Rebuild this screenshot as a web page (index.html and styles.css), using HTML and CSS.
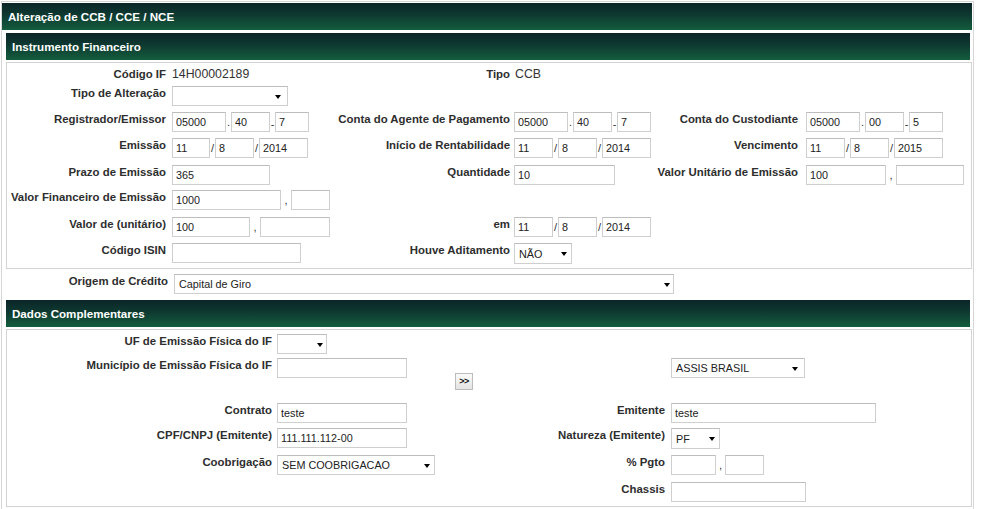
FILE: index.html
```html
<!DOCTYPE html>
<html lang="pt-BR">
<head>
    <meta charset="UTF-8">
    <title>Alteração de CCB / CCE / NCE</title>
    <link rel="stylesheet" href="styles.css">
</head>
<body>
    <div class="page">
        <div class="title-bar">Alteração de CCB / CCE / NCE</div>

        <div class="page-body">
            <div class="section-bar">Instrumento Financeiro</div>

            <!-- bloco 1: dados do instrumento -->
            <div class="box box-if">
                <div class="lbl col1">Código IF</div>
                <div class="val col2">14H00002189</div>
                <div class="lbl col3">Tipo</div>
                <div class="val col4">CCB</div>

                <div class="lbl col1">Tipo de Alteração</div>
                <div class="fld col2"><span class="sel w116 arrow-wide"><select><option></option></select></span></div>

                <div class="lbl col1">Registrador/Emissor</div>
                <div class="fld col2">
                    <input class="in w54" value="05000"><span class="sep">.</span><input class="in w39" value="40"><span class="sep dash">-</span><input class="in w34" value="7">
                </div>
                <div class="lbl col3">Conta do Agente de Pagamento</div>
                <div class="fld col4">
                    <input class="in w54" value="05000"><span class="sep">.</span><input class="in w39" value="40"><span class="sep dash">-</span><input class="in w34" value="7">
                </div>
                <div class="lbl col5">Conta do Custodiante</div>
                <div class="fld col6">
                    <input class="in w54" value="05000"><span class="sep">.</span><input class="in w39" value="00"><span class="sep dash">-</span><input class="in w34" value="5">
                </div>

                <div class="lbl col1">Emissão</div>
                <div class="fld col2">
                    <input class="in w38" value="11"><span class="sep">/</span><input class="in w39" value="8"><span class="sep">/</span><input class="in w49" value="2014">
                </div>
                <div class="lbl col3">Início de Rentabilidade</div>
                <div class="fld col4">
                    <input class="in w39" value="11"><span class="sep">/</span><input class="in w39" value="8"><span class="sep">/</span><input class="in w49" value="2014">
                </div>
                <div class="lbl col5">Vencimento</div>
                <div class="fld col6">
                    <input class="in w39" value="11"><span class="sep">/</span><input class="in w39" value="8"><span class="sep">/</span><input class="in w49" value="2015">
                </div>

                <div class="lbl col1">Prazo de Emissão</div>
                <div class="fld col2"><input class="in w98" value="365"></div>
                <div class="lbl col3">Quantidade</div>
                <div class="fld col4"><input class="in w101" value="10"></div>
                <div class="lbl col5">Valor Unitário de Emissão</div>
                <div class="fld col6">
                    <input class="in w80" value="100"><span class="sep wide">,</span><input class="in w68" value="">
                </div>

                <div class="lbl col1">Valor Financeiro de Emissão</div>
                <div class="fld col2">
                    <input class="in w109" value="1000"><span class="sep wide">,</span><input class="in w39" value="">
                </div>

                <div class="lbl col1">Valor de (unitário)</div>
                <div class="fld col2">
                    <input class="in w78" value="100"><span class="sep wide">,</span><input class="in w70" value="">
                </div>
                <div class="lbl col3">em</div>
                <div class="fld col4">
                    <input class="in w39" value="11"><span class="sep">/</span><input class="in w39" value="8"><span class="sep">/</span><input class="in w49" value="2014">
                </div>

                <div class="lbl col1">Código ISIN</div>
                <div class="fld col2"><input class="in w129" value=""></div>
                <div class="lbl col3">Houve Aditamento</div>
                <div class="fld col4"><span class="sel w58 tall"><select><option>NÃO</option></select></span></div>
            </div>

            <div class="origem">
                <div class="lbl">Origem de Crédito</div>
                <span class="sel w500 arrow-tight"><select><option>Capital de Giro</option></select></span>
            </div>

            <div class="section-bar">Dados Complementares</div>

            <!-- bloco 2: dados complementares -->
            <div class="box box-dc">
                <div class="lbl col1">UF de Emissão Física do IF</div>
                <div class="fld col2"><span class="sel w50 arrow-tight"><select><option></option></select></span></div>

                <div class="lbl col1">Município de Emissão Física do IF</div>
                <div class="fld col2"><input class="in w130" value=""></div>
                <div class="col3"><button class="btn-add" type="button">&gt;&gt;</button></div>
                <div class="fld col5"><span class="sel w134 arrow-wide"><select><option>ASSIS BRASIL</option></select></span></div>

                <div class="lbl col1">Contrato</div>
                <div class="fld col2"><input class="in w130" value="teste"></div>
                <div class="lbl col4">Emitente</div>
                <div class="fld col5"><input class="in w205" value="teste"></div>

                <div class="lbl col1">CPF/CNPJ (Emitente)</div>
                <div class="fld col2"><input class="in w130" value="111.111.112-00"></div>
                <div class="lbl col4">Natureza (Emitente)</div>
                <div class="fld col5"><span class="sel w49 tall"><select><option>PF</option></select></span></div>

                <div class="lbl col1">Coobrigação</div>
                <div class="fld col2"><span class="sel w158"><select><option>SEM COOBRIGACAO</option></select></span></div>
                <div class="lbl col4">% Pgto</div>
                <div class="fld col5">
                    <input class="in w45" value=""><span class="sep pct">,</span><input class="in w39" value="">
                </div>

                <div class="lbl col4">Chassis</div>
                <div class="fld col5"><input class="in w135" value=""></div>
            </div>
        </div>
    </div>
</body>
</html>
```

FILE: styles.css
```css
* {
    margin: 0;
    padding: 0;
    box-sizing: border-box;
}

html, body {
    overflow: hidden;
}

body {
    background: #fff;
    color: #333;
    font-family: "Liberation Sans", Arial, sans-serif;
}

.page {
    width: 973px;
    margin: 1px 0 0 1px;
    padding: 1px 0 30px;
    border: 1px solid #d6d6d6;
}

.title-bar,
.section-bar {
    height: 27px;
    padding-left: 6px;
    line-height: 27px;
    color: #fff;
    font-size: 11.6px;
    font-weight: bold;
    background: linear-gradient(to bottom, #0b2528 0%, #0e3a31 45%, #145d3d 100%);
}

.title-bar {
    margin-right: 1px;
}

.page-body {
    padding: 3px 0 0 4px;
}

.section-bar {
    margin-right: 3px;
    margin-bottom: 2px;
}

.box {
    display: grid;
    margin-right: 1px;
    border: 1px solid #d3d3d3;
}

/* grade de 3 pares label/campo */
.box-if {
    grid-template-columns: 159px 169px 175px 145px 143px 1fr;
    grid-template-rows: 19px 26px 26px 27px 25px 27px 26px 21px;
    padding: 4px 0;
}

.box-dc {
    grid-template-columns: 265px 173px 95px 125px 1fr;
    grid-template-rows: 24px 45px 25px 27px 27px 20px;
    padding: 4px 0;
}

.col1 { grid-column: 1; }
.col2 { grid-column: 2; }
.col3 { grid-column: 3; }
.col4 { grid-column: 4; }
.col5 { grid-column: 5; }
.col6 { grid-column: 6; }

.lbl {
    justify-self: end;
    align-self: start;
    padding-top: 1px;
    font-size: 11.4px;
    font-weight: bold;
    line-height: 13px;
    white-space: nowrap;
    color: #2e2e2e;
}

.val {
    align-self: start;
    padding: 1px 0 0 6px;
    font-size: 12.3px;
    line-height: 13px;
    color: #333;
}

.box-if .val.col4 {
    padding-left: 5px;
}

.fld {
    display: flex;
    align-items: center;
    align-self: start;
}

.box-if .fld.col2 { padding-left: 6px; }
.box-if .fld.col4 { padding-left: 4px; }
.box-if .fld.col6 { padding-left: 8px; }
.box-dc .fld.col2 { padding-left: 5px; }
.box-dc .fld.col5 { padding-left: 6px; }

.in {
    height: 20px;
    padding: 0 3px;
    border: 1px solid #cfcfcf;
    border-top-color: #bdbdbd;
    background: #fff;
    color: #222;
    font-family: "Liberation Sans", Arial, sans-serif;
    font-size: 10.8px;
    outline: none;
}

.sep {
    width: 5px;
    font-size: 11px;
    line-height: 20px;
    text-align: center;
    color: #333;
}

.sep.dash {
    padding-top: 5px;
    line-height: 15px;
}

.sep.wide {
    width: 10px;
}

.sep.pct {
    width: 9px;
}

.sel {
    position: relative;
    display: inline-block;
    height: 20px;
}

.sel.tall {
    height: 21px;
}

.sel select {
    width: 100%;
    height: 100%;
    padding: 0 14px 0 4px;
    border: 1px solid #cfcfcf;
    border-top-color: #bdbdbd;
    background: #fff;
    color: #222;
    font-family: "Liberation Sans", Arial, sans-serif;
    font-size: 10.8px;
    appearance: none;
    -webkit-appearance: none;
    outline: none;
}

/* setinha do select */
.sel::after {
    content: "";
    position: absolute;
    right: 5px;
    top: 9px;
    border-left: 3.5px solid transparent;
    border-right: 3.5px solid transparent;
    border-top: 4px solid #000;
    pointer-events: none;
}

.sel.arrow-wide::after { right: 7px; }
.sel.arrow-tight::after { right: 4px; }

.origem {
    display: flex;
    align-items: flex-start;
    margin: 5px 0 6px;
}

.origem .lbl {
    width: 162px;
    text-align: right;
}

.origem .sel {
    margin-left: 6px;
}

.btn-add {
    width: 18px;
    height: 17px;
    margin: 15px 0 0 10px;
    padding: 0;
    border: 1px solid #bcbcbc;
    background: linear-gradient(to bottom, #fbfbfb, #e4e4e4);
    color: #111;
    font-family: "Liberation Sans", Arial, sans-serif;
    font-size: 9px;
    font-weight: bold;
    line-height: 15px;
    letter-spacing: -0.5px;
    text-align: center;
}

.w34 { width: 34px; }
.w38 { width: 38px; }
.w39 { width: 39px; }
.w45 { width: 45px; }
.w49 { width: 49px; }
.w50 { width: 50px; }
.w54 { width: 54px; }
.w58 { width: 58px; }
.w68 { width: 68px; }
.w70 { width: 70px; }
.w78 { width: 78px; }
.w80 { width: 80px; }
.w98 { width: 98px; }
.w101 { width: 101px; }
.w109 { width: 109px; }
.w116 { width: 116px; }
.w129 { width: 129px; }
.w130 { width: 130px; }
.w134 { width: 134px; }
.w135 { width: 135px; }
.w158 { width: 158px; }
.w205 { width: 205px; }
.w500 { width: 500px; }
```
